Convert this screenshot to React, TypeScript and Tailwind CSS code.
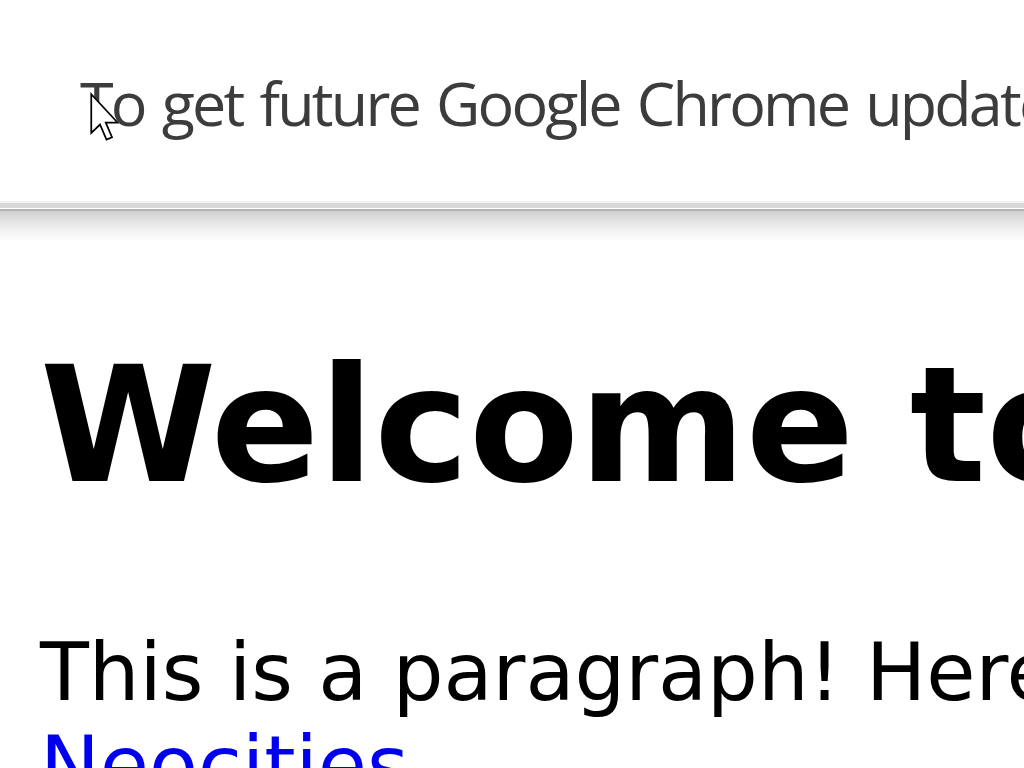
export default function App() {
  return (
    <div className="relative h-[768px] w-[1024px] overflow-hidden bg-white">
      {/* info bar */}
      <div className="flex h-[201px] items-start overflow-hidden whitespace-nowrap bg-white pl-[80px] pt-[59px]">
        <p className="font-['Open_Sans',sans-serif] text-[61px] leading-[88px] tracking-[-2.8px] [word-spacing:4px] text-[#3c3c3c]">
          To get future Google Chrome updates, you'll need Windows 10 or later.
        </p>
      </div>
      <div className="h-[2px] bg-[#f2f2f2]" />
      <div className="h-[5px] bg-[#d8d8d8]" />
      <div className="h-[1px] bg-white" />
      <div className="h-[2px] bg-[#b3b3b3]" />
      <div className="h-[30px] bg-gradient-to-b from-[#d0d0d0] via-[#ececec] to-white" />

      {/* page */}
      <div className="-mt-[15px] whitespace-nowrap px-[40px] font-['DejaVu_Sans',sans-serif] text-black">
        <h1 className="mt-[107px] text-[160px] font-bold leading-[186px]">Welcome to my Website!</h1>
        <p className="mt-[107px] text-[80px] leading-[93px]">
          This is a paragraph! Here's how you make a link:
          <br />
          <a href="#" className="text-[#0000ee] underline decoration-[6px] underline-offset-[8px]">
            Neocities
          </a>
          .
        </p>
      </div>

      {/* mouse pointer */}
      <svg
        className="absolute left-[90px] top-[92px]"
        width="30"
        height="52"
        viewBox="0 0 12 20"
      >
        <path
          d="M0.5 0.5 L0.5 16 L4 12.6 L6.6 18.6 L8.8 17.7 L6.3 11.8 L11 11.8 Z"
          fill="white"
          stroke="black"
          strokeWidth="0.7"
          strokeLinejoin="miter"
        />
      </svg>
    </div>
  );
}
